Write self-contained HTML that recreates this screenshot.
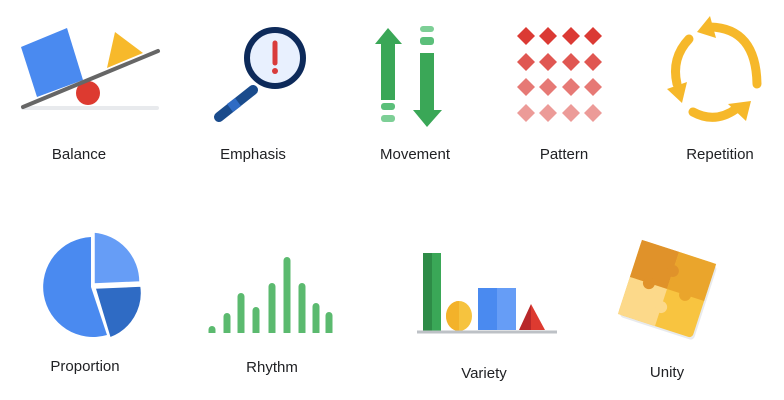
<!DOCTYPE html>
<html><head><style>
html,body{margin:0;padding:0;background:#fff;width:784px;height:400px;overflow:hidden}
svg text{font-family:"Liberation Sans",sans-serif;font-size:15px;fill:#202124;text-anchor:middle}
</style></head><body>
<svg width="784" height="400" viewBox="0 0 784 400" xmlns="http://www.w3.org/2000/svg">
<!-- Balance -->
<line x1="23" y1="108" x2="157" y2="108" stroke="#e8eaed" stroke-width="4" stroke-linecap="round"/>
<polygon points="21,47 67,28 83,80 37,97" fill="#4a8af0"/>
<polygon points="115,32 107,68 143,53" fill="#f7b92b"/>
<circle cx="88" cy="93" r="12" fill="#dd3a30"/>
<line x1="23" y1="107" x2="158" y2="51" stroke="#666" stroke-width="4" stroke-linecap="round"/>
<text x="79" y="159">Balance</text>
<!-- Emphasis -->
<line x1="253" y1="90" x2="219" y2="117" stroke="#1a4b8c" stroke-width="10" stroke-linecap="round"/>
<line x1="238" y1="102" x2="230" y2="108" stroke="#2f6bc4" stroke-width="10"/>
<circle cx="275" cy="58" r="28" fill="#e8f0fe" stroke="#0d2a5a" stroke-width="6"/>
<line x1="275" y1="43" x2="275" y2="63" stroke="#d93b3b" stroke-width="5" stroke-linecap="round"/>
<circle cx="275" cy="71" r="3" fill="#d93b3b"/>
<text x="253" y="159">Emphasis</text>
<!-- Movement -->
<polygon points="388,28 402,44 395,44 395,100 381,100 381,44 375,44" fill="#3aa757"/>
<rect x="381" y="103" width="14" height="7" rx="3" fill="#5bbf7a"/>
<rect x="381" y="115" width="14" height="7" rx="3" fill="#7dcf96"/>
<rect x="420" y="26" width="14" height="6" rx="3" fill="#7dcf96"/>
<rect x="420" y="37" width="14" height="8" rx="3" fill="#5bbf7a"/>
<polygon points="420,53 434,53 434,110 442,110 427,127 413,110 420,110" fill="#3aa757"/>
<text x="415" y="159">Movement</text>
<!-- Pattern -->
<g id="dr">
<polygon points="526,27 535,36 526,45 517,36" fill="#db3a34"/>
<polygon points="548,27 557,36 548,45 539,36" fill="#db3a34"/>
<polygon points="571,27 580,36 571,45 562,36" fill="#db3a34"/>
<polygon points="593,27 602,36 593,45 584,36" fill="#db3a34"/>
</g>
<use href="#dr" y="26" style="opacity:.85"/>
<use href="#dr" y="51" style="opacity:.68"/>
<use href="#dr" y="77" style="opacity:.5"/>
<text x="564" y="159">Pattern</text>
<!-- Repetition -->
<g fill="none" stroke="#f6b82a" stroke-width="9" stroke-linecap="round">
<path d="M710 27 Q756 28 757 84"/>
<path d="M689 39 Q671 58 677 84"/>
<path d="M693 112 Q715 124 736 109"/>
</g>
<polygon points="697,32 710,16 716,38" fill="#f6b82a"/>
<polygon points="667,89 687,82 682,103" fill="#f6b82a"/>
<polygon points="728,104 751,101 746,121" fill="#f6b82a"/>
<text x="720" y="159">Repetition</text>
<!-- Proportion -->
<path d="M91 287 L91 237 A50 50 0 1 0 107 335 Z" fill="#4a8af0"/>
<path d="M94 284 L94 232 A50 50 0 0 1 140 282 Z" fill="#669df6" stroke="#fff" stroke-width="1.5"/>
<path d="M95 288 L141 286 A48 48 0 0 1 110 338 Z" fill="#2f6bc4" stroke="#fff" stroke-width="1.5"/>
<text x="85" y="371">Proportion</text>
<!-- Rhythm -->
<g fill="#5bba6f">
<rect x="208.5" y="326" width="7" height="10" rx="3.5"/>
<rect x="223.5" y="313" width="7" height="23" rx="3.5"/>
<rect x="237.5" y="293" width="7" height="43" rx="3.5"/>
<rect x="252.5" y="307" width="7" height="29" rx="3.5"/>
<rect x="268.5" y="283" width="7" height="53" rx="3.5"/>
<rect x="283.5" y="257" width="7" height="79" rx="3.5"/>
<rect x="298.5" y="283" width="7" height="53" rx="3.5"/>
<rect x="312.5" y="303" width="7" height="33" rx="3.5"/>
<rect x="325.5" y="312" width="7" height="24" rx="3.5"/>
</g>
<rect x="200" y="333" width="140" height="6" fill="#fff"/>
<text x="272" y="372">Rhythm</text>
<!-- Variety -->
<rect x="423" y="253" width="9" height="78" fill="#2e8b47"/>
<rect x="432" y="253" width="9" height="78" fill="#3aa757"/>
<ellipse cx="459" cy="316" rx="13" ry="15" fill="#f6c33e"/>
<path d="M459 301 A13 15 0 0 0 459 331 Z" fill="#f3b22a"/>
<rect x="478" y="288" width="19" height="42" fill="#4a8af0"/>
<rect x="497" y="288" width="19" height="42" fill="#669df6"/>
<polygon points="531,304 519,330 531,330" fill="#b8282a"/>
<polygon points="531,304 545,330 531,330" fill="#dd3a30"/>
<line x1="417" y1="332" x2="557" y2="332" stroke="#bdc1c6" stroke-width="3"/>
<text x="484" y="378">Variety</text>
<!-- Unity -->
<g transform="translate(667,289) rotate(18)">
<rect x="-37" y="-37" width="78" height="78" rx="4" fill="#e8eaed"/>
<rect x="-39" y="-39" width="78" height="78" rx="4" fill="#f8c440"/>
<rect x="-39" y="-39" width="39" height="39" fill="#e0922a"/>
<rect x="0" y="-39" width="39" height="39" fill="#eaa52c"/>
<rect x="-39" y="0" width="39" height="39" fill="#fcd98a"/>
<circle cx="0" cy="-19" r="6" fill="#e0922a"/>
<circle cx="-19" cy="0" r="6" fill="#e0922a"/>
<circle cx="19" cy="0" r="6" fill="#eaa52c"/>
<circle cx="0" cy="19" r="6" fill="#fcd98a"/>
</g>
<text x="667" y="377">Unity</text>
</svg>
</body></html>
